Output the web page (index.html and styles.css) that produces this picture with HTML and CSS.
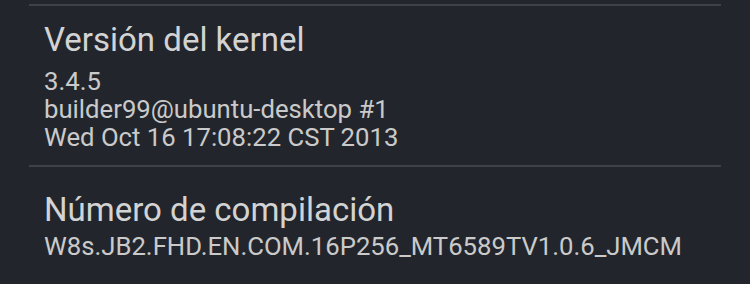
FILE: index.html
```html
<!DOCTYPE html>
<html lang="es">
<head>
<meta charset="utf-8">
<link rel="stylesheet" href="styles.css">
</head>
<body>
<div class="list">
  <div class="divider"></div>
  <div class="item item-kernel">
    <div class="title">Versión del kernel</div>
    <div class="summary">3.4.5<br>builder99@ubuntu-desktop #1<br>Wed Oct 16 17:08:22 CST 2013</div>
  </div>
  <div class="divider"></div>
  <div class="item item-build">
    <div class="title">Número de compilación</div>
    <div class="summary">W8s.JB2.FHD.EN.COM.16P256_MT6589TV1.0.6_JMCM</div>
  </div>
</div>
</body>
</html>
```
FILE: styles.css
```css
html, body {
  margin: 0;
  padding: 0;
  background: #22262c;
  width: 750px;
  height: 284px;
  overflow: hidden;
}
body {
  font-family: Roboto, "Noto Sans", sans-serif;
  color: #d4d4d4;
}
.list {
  padding-top: 4px;
}
.divider {
  margin-left: 29px;
  width: 692px;
  height: 2px;
  background: #3d4148;
}
.item {
  padding-left: 44px;
}
.item-kernel {
  padding-top: 15px;
  padding-bottom: 14px;
}
.item-build {
  padding-top: 24px;
}
.title {
  font-size: 33px;
  line-height: 38px;
  color: #d3d3d3;
}
.summary {
  font-size: 25.7px;
  line-height: 28px;
  color: #cacaca;
}
.item-kernel .summary {
  margin-top: 8px;
}
.item-build .summary {
  margin-top: 3px;
}
```
